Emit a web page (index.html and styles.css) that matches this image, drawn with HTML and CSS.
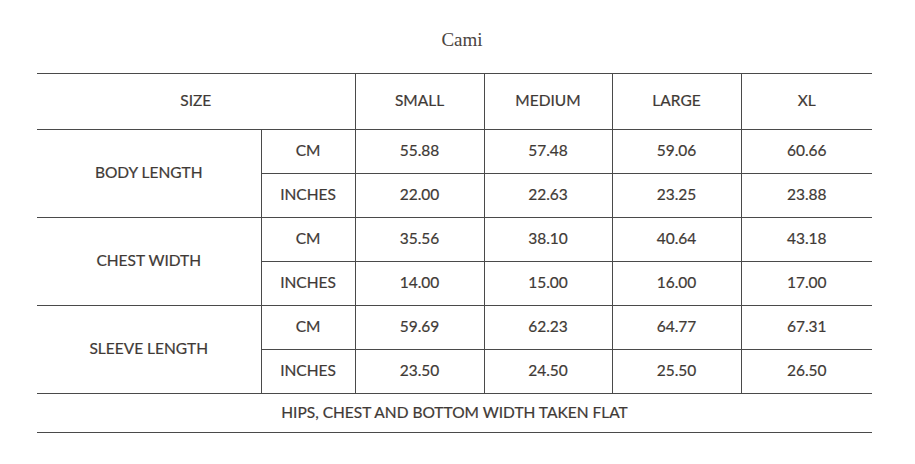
FILE: index.html
```html
<!DOCTYPE html>
<html lang="en">
<head>
<meta charset="utf-8">
<title>Cami</title>
<link rel="stylesheet" href="styles.css">
</head>
<body>
<div class="page">
  <h2 class="title">Cami</h2>
  <table class="size-table">
    <colgroup>
      <col class="c-label"><col class="c-unit"><col class="c-s"><col class="c-m"><col class="c-l"><col class="c-xl">
    </colgroup>
    <thead>
      <tr class="head-row">
        <th colspan="2">SIZE</th>
        <th>SMALL</th>
        <th>MEDIUM</th>
        <th>LARGE</th>
        <th>XL</th>
      </tr>
    </thead>
    <tbody>
      <tr>
        <td rowspan="2" class="label">BODY LENGTH</td>
        <td>CM</td><td>55.88</td><td>57.48</td><td>59.06</td><td>60.66</td>
      </tr>
      <tr>
        <td>INCHES</td><td>22.00</td><td>22.63</td><td>23.25</td><td>23.88</td>
      </tr>
      <tr>
        <td rowspan="2" class="label">CHEST WIDTH</td>
        <td>CM</td><td>35.56</td><td>38.10</td><td>40.64</td><td>43.18</td>
      </tr>
      <tr>
        <td>INCHES</td><td>14.00</td><td>15.00</td><td>16.00</td><td>17.00</td>
      </tr>
      <tr>
        <td rowspan="2" class="label">SLEEVE LENGTH</td>
        <td>CM</td><td>59.69</td><td>62.23</td><td>64.77</td><td>67.31</td>
      </tr>
      <tr>
        <td>INCHES</td><td>23.50</td><td>24.50</td><td>25.50</td><td>26.50</td>
      </tr>
      <tr class="foot-row">
        <td colspan="6">HIPS, CHEST AND BOTTOM WIDTH TAKEN FLAT</td>
      </tr>
    </tbody>
  </table>
</div>
</body>
</html>
```

FILE: styles.css
```css
html, body {
  margin: 0;
  padding: 0;
  background: #ffffff;
}

body {
  font-family: "Lato", "Liberation Sans", sans-serif;
  color: #3f3a36;
}

.page {
  padding: 29px 0 0 37px;
}

.title {
  margin: 0 0 22px 0;
  padding-left: 8px;
  width: 834px;
  text-align: center;
  font-family: "Liberation Serif", serif;
  font-weight: normal;
  font-size: 19px;
  line-height: 22px;
  color: #4a4440;
}

.size-table {
  width: 835px;
  border-collapse: collapse;
  table-layout: fixed;
  font-size: 15.5px;
}

.c-label { width: 224px; }
.c-unit { width: 94px; }
.c-s { width: 129px; }
.c-m { width: 128px; }
.c-l { width: 129px; }
.c-xl { width: 131px; }

.size-table th,
.size-table td {
  border: 1px solid #4a4a4a;
  text-align: center;
  vertical-align: middle;
  font-weight: normal;
  padding: 0 0 3px 0;
  height: 40px;
  line-height: 18px;
  -webkit-text-stroke: 0.2px #3f3a36;
}

.size-table tr > :first-child {
  border-left: none;
}

.size-table tr > :last-child {
  border-right: none;
}

.size-table .head-row th {
  height: 52px;
}

.size-table td.label {
  border-left: none;
}

.size-table .foot-row td {
  height: 36px;
  padding-bottom: 2px;
  border-left: none;
  border-right: none;
}
```
